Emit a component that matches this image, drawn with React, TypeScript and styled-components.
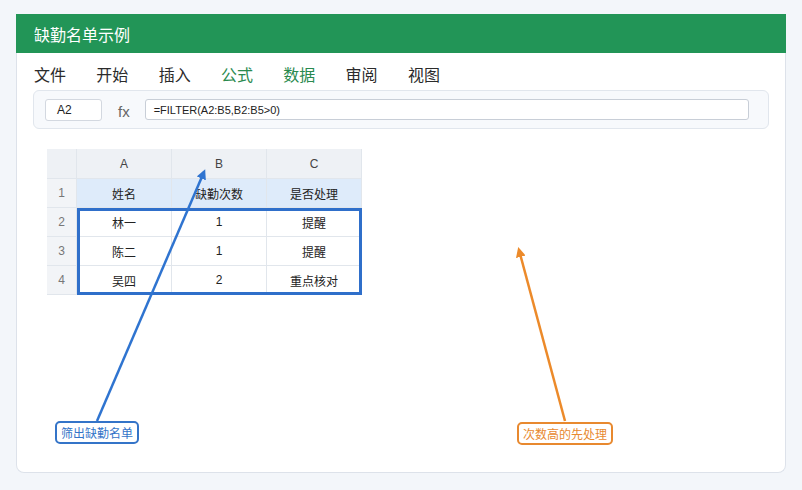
import styled, { createGlobalStyle } from "styled-components";

const GlobalStyle = createGlobalStyle`
  body {
    margin: 0;
    background: #f3f6fa;
    font-family: "Liberation Sans", "Noto Sans CJK SC", sans-serif;
    color: #333;
  }
`;

const Page = styled.div`
  padding: 14px 16px 16px;
`;

const Card = styled.div`
  position: relative;
  width: 768px;
  height: 458px;
  background: #fff;
  border: 1px solid #dde2ea;
  border-top: none;
  border-radius: 0 0 8px 8px;
`;

const TitleBar = styled.div`
  height: 39px;
  margin: 0 -1px;
  background: #229557;
  color: #fff;
  font-size: 16px;
  display: flex;
  align-items: center;
  padding-left: 18px;
`;

const Menu = styled.nav`
  display: flex;
  gap: 30.3px;
  padding: 9px 17px 0;
  height: 28px;
  font-size: 16px;
`;

const MenuItem = styled.span<{ active?: boolean }>`
  color: ${(p) => (p.active ? "#2a8a4f" : "#2b2b2b")};
`;

const FormulaBar = styled.div`
  margin: 0 16px;
  height: 37px;
  background: #f7f9fc;
  border: 1px solid #e1e6ed;
  border-radius: 6px;
  display: flex;
  align-items: center;
  padding: 0 19px 0 11px;
`;

const NameBox = styled.div`
  width: 44px;
  height: 20px;
  border: 1px solid #d3d8e0;
  border-radius: 3px;
  background: #fff;
  font-size: 12px;
  display: flex;
  align-items: center;
  padding-left: 11px;
  color: #222;
`;

const Fx = styled.span`
  font-size: 15px;
  color: #666;
  margin: 3px 15px 0 16px;
`;

const FormulaInput = styled.div`
  flex: 1;
  height: 19px;
  border: 1px solid #c8ced7;
  border-radius: 3px;
  background: #fff;
  font-size: 11px;
  display: flex;
  align-items: center;
  padding-left: 8px;
  color: #222;
`;

const Sheet = styled.div`
  position: relative;
  margin: 20px 0 0 30px;
  display: grid;
  grid-template-columns: 30px repeat(3, 95px);
  grid-template-rows: 30px repeat(4, 29px);
  width: 315px;
`;

const Cell = styled.div<{ kind?: "corner" | "col" | "row" | "head" | "data" }>`
  display: flex;
  align-items: center;
  justify-content: center;
  font-size: 12px;
  border-right: 1px solid #e1e6ec;
  border-bottom: 1px solid #e1e6ec;
  background: ${(p) =>
    p.kind === "corner" || p.kind === "col"
      ? "#eef1f5"
      : p.kind === "row"
      ? "#f2f4f7"
      : p.kind === "head"
      ? "#deebfa"
      : "#fff"};
  color: ${(p) => (p.kind === "row" ? "#777" : p.kind === "col" ? "#444" : "#222")};
`;

const Selection = styled.div`
  position: absolute;
  left: 30px;
  top: 59px;
  width: 285px;
  height: 87px;
  box-sizing: border-box;
  border: 3px solid #2f6fca;
`;

const Overlay = styled.svg`
  position: absolute;
  left: 0;
  top: 0;
  pointer-events: none;
`;

const Callout = styled.div<{ tone: string; x: number; y: number }>`
  position: absolute;
  left: ${(p) => p.x}px;
  top: ${(p) => p.y}px;
  height: 19px;
  padding: 0 4px;
  display: flex;
  align-items: center;
  font-size: 12px;
  font-family: "Noto Sans CJK SC", sans-serif;
  color: ${(p) => p.tone};
  background: #fff;
  border: 2px solid ${(p) => p.tone};
  border-radius: 5px;
`;

const menu = [
  { label: "文件" },
  { label: "开始" },
  { label: "插入" },
  { label: "公式", active: true },
  { label: "数据", active: true },
  { label: "审阅" },
  { label: "视图" },
];

const rows = [
  ["姓名", "缺勤次数", "是否处理"],
  ["林一", "1", "提醒"],
  ["陈二", "1", "提醒"],
  ["吴四", "2", "重点核对"],
];

export default function App() {
  return (
    <>
      <GlobalStyle />
      <Page>
        <Card>
          <TitleBar>缺勤名单示例</TitleBar>
          <Menu>
            {menu.map((m) => (
              <MenuItem key={m.label} active={m.active}>
                {m.label}
              </MenuItem>
            ))}
          </Menu>
          <FormulaBar>
            <NameBox>A2</NameBox>
            <Fx>fx</Fx>
            <FormulaInput>=FILTER(A2:B5,B2:B5&gt;0)</FormulaInput>
          </FormulaBar>
          <Sheet>
            <Cell kind="corner" />
            {["A", "B", "C"].map((c) => (
              <Cell key={c} kind="col">
                {c}
              </Cell>
            ))}
            {rows.map((r, i) => [
              <Cell key={`n${i}`} kind="row">
                {i + 1}
              </Cell>,
              ...r.map((v, j) => (
                <Cell key={`${i}-${j}`} kind={i === 0 ? "head" : "data"}>
                  {v}
                </Cell>
              )),
            ])}
            <Selection />
          </Sheet>

          <Overlay width="768" height="458">
            <defs>
              <marker id="headBlue" markerWidth="10" markerHeight="10" refX="7" refY="5" orient="auto" markerUnits="userSpaceOnUse">
                <path d="M0,0 L10,5 L0,10 z" fill="#2f74d0" />
              </marker>
              <marker id="headOrange" markerWidth="10" markerHeight="10" refX="7" refY="5" orient="auto" markerUnits="userSpaceOnUse">
                <path d="M0,0 L10,5 L0,10 z" fill="#ec8a2a" />
              </marker>
            </defs>
            <line x1="80" y1="407" x2="187" y2="158" stroke="#2f74d0" strokeWidth="2.5" markerEnd="url(#headBlue)" />
            <line x1="548" y1="407" x2="502" y2="236" stroke="#ec8a2a" strokeWidth="2.5" markerEnd="url(#headOrange)" />
          </Overlay>

          <Callout tone="#3474c8" x={38} y={407}>
            筛出缺勤名单
          </Callout>
          <Callout tone="#e8892f" x={500} y={408}>
            次数高的先处理
          </Callout>
        </Card>
      </Page>
    </>
  );
}
